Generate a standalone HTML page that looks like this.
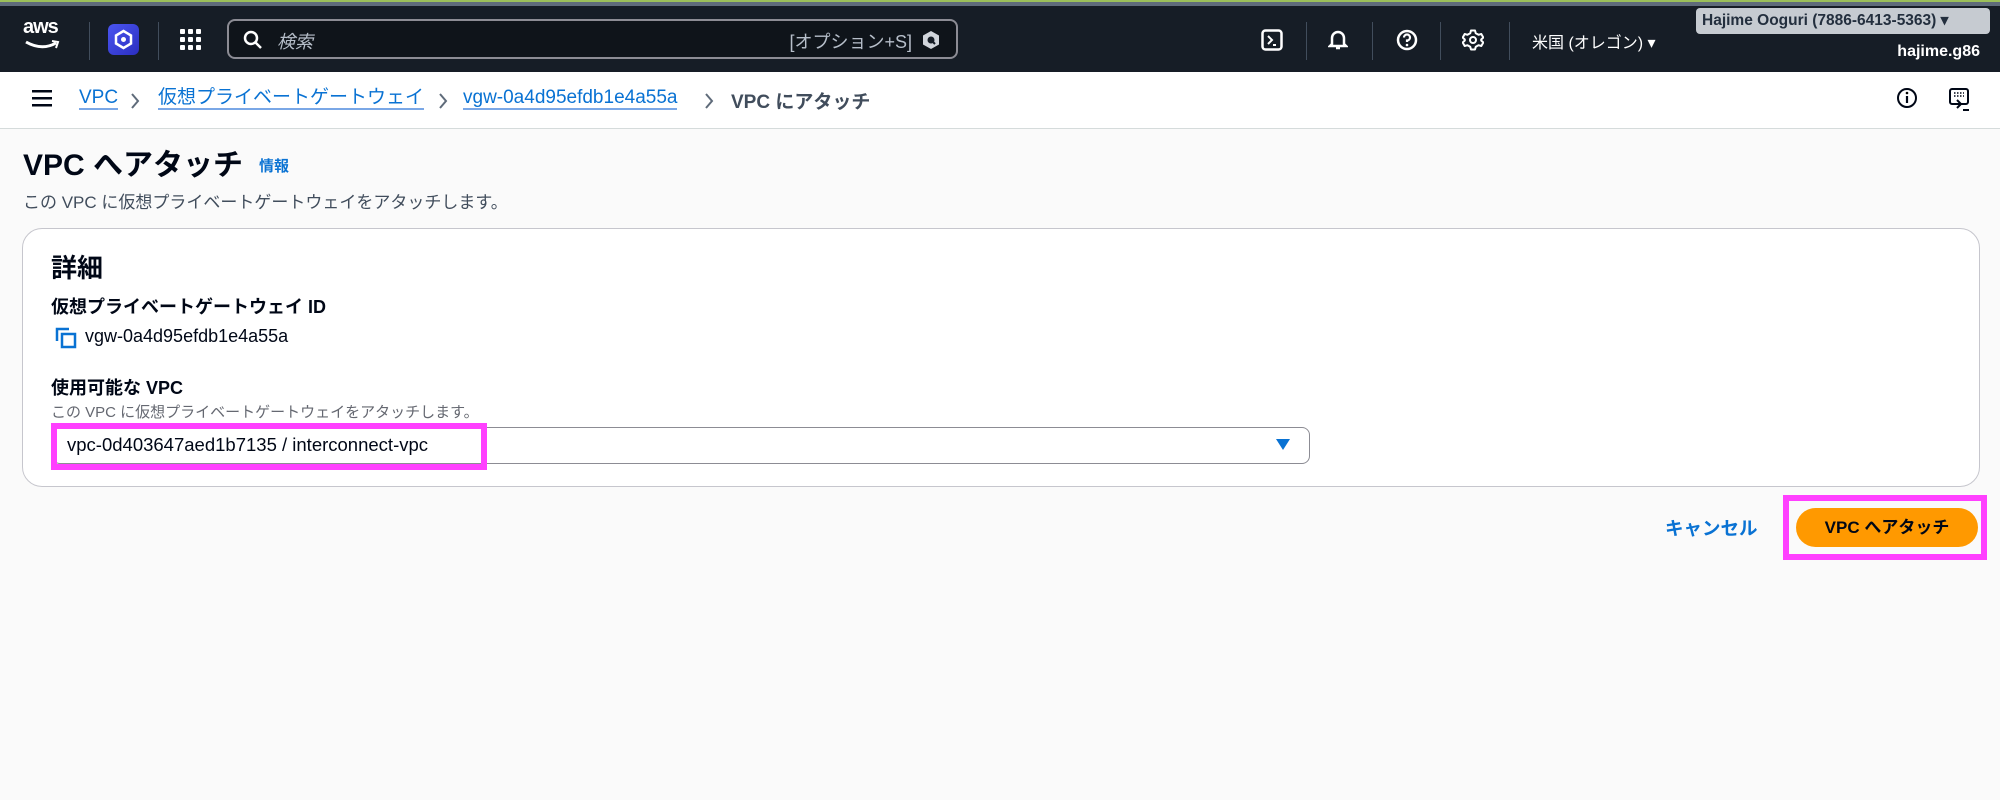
<!DOCTYPE html>
<html><head><meta charset="utf-8"><style>
*{box-sizing:border-box;margin:0;padding:0}
body{width:2000px;height:800px;overflow:hidden;background:#fafafa;font-family:"Liberation Sans","Noto Sans CJK JP",sans-serif;color:#000716;position:relative}
.a{position:absolute;white-space:nowrap}
.top{position:absolute;left:0;top:0;width:2000px;height:72px;background:#161d26;border-top:2px solid #9bbf5a}
.top:before{content:"";position:absolute;left:0;top:0;width:100%;height:4px;background:#5f6b7a}
.div{position:absolute;top:20px;width:1px;height:38px;background:#414d5c}
.crumb{position:absolute;left:0;top:72px;width:2000px;height:57px;background:#fff;border-bottom:1px solid #d5dbdb}
.lk{color:#0972d3;border-bottom:2px solid #7aa7e6;line-height:22px}
.bc{position:absolute;top:15px;font-size:19px}
.card{position:absolute;left:22px;top:228px;width:1958px;height:259px;background:#fff;border:1px solid #c6c6cd;border-radius:20px}
.mag{position:absolute;border:6px solid #ff40ff}
</style></head><body>
<div class="top">
 <div class="a" style="left:23px;top:14px;color:#fff;font-size:20px;font-weight:bold;letter-spacing:-1px">aws</div>
 <svg class="a" style="left:24px;top:38px" width="36" height="12"><path d="M2 2 Q18 11 32 3" stroke="#fff" stroke-width="3" fill="none"/><path d="M28 1 L34 2 L32 8" stroke="#fff" stroke-width="2" fill="none"/></svg>
 <div class="div" style="left:89px"></div>
 <div class="a" style="left:108px;top:22px;width:31px;height:31px;border-radius:6px;background:linear-gradient(135deg,#4a55f0,#2b2ec0)"></div>
 <svg class="a" style="left:112px;top:26px" width="23" height="23"><path d="M11.5 3 L19 7.5 V15.5 L11.5 20 L4 15.5 V7.5Z" fill="none" stroke="#fff" stroke-width="2.5"/><circle cx="11.5" cy="11.5" r="2.5" fill="#fff"/></svg>
 <div class="div" style="left:158px"></div>
 <svg class="a" style="left:180px;top:27px" width="22" height="22" fill="#fff"><rect x="0" y="0" width="5" height="5" rx="1"/><rect x="8" y="0" width="5" height="5" rx="1"/><rect x="16" y="0" width="5" height="5" rx="1"/><rect x="0" y="8" width="5" height="5" rx="1"/><rect x="8" y="8" width="5" height="5" rx="1"/><rect x="16" y="8" width="5" height="5" rx="1"/><rect x="0" y="16" width="5" height="5" rx="1"/><rect x="8" y="16" width="5" height="5" rx="1"/><rect x="16" y="16" width="5" height="5" rx="1"/></svg>
 <div class="a" style="left:227px;top:17px;width:731px;height:40px;border:2px solid #8c8c94;border-radius:8px;background:#0f141a"></div>
 <svg class="a" style="left:243px;top:28px" width="20" height="20"><circle cx="8" cy="8" r="6" stroke="#fff" stroke-width="2.5" fill="none"/><path d="M12.5 12.5 L18 18" stroke="#fff" stroke-width="2.5"/></svg>
 <div class="a" style="left:277px;top:26px;color:#b6bec9;font-size:18px;font-style:italic">検索</div>
 <div class="a" style="right:1088px;top:26px;color:#b6bec9;font-size:18px">[オプション+S]</div>
 <svg class="a" style="left:921px;top:27px" width="20" height="22"><path d="M10 2 L18 6.5 V15.5 L10 20 L2 15.5 V6.5Z" fill="#d1d5db"/><circle cx="10" cy="11" r="3.5" fill="#161d26"/><path d="M10 11 L14 15" stroke="#161d26" stroke-width="2"/></svg>
 <svg class="a" style="left:1261px;top:27px" width="22" height="22"><rect x="1.5" y="1.5" width="19" height="19" rx="3" stroke="#fff" stroke-width="2.5" fill="none"/><path d="M7 7 L11 11 L7 15 M12 16 H15" stroke="#fff" stroke-width="2" fill="none"/></svg>
 <div class="div" style="left:1306px"></div>
 <svg class="a" style="left:1328px;top:26px" width="20" height="24"><path d="M4 16 V10 A6 6 0 0 1 16 10 V16 L18 18 H2Z M8 20 H12" stroke="#fff" stroke-width="2.5" fill="none"/></svg>
 <div class="div" style="left:1372px"></div>
 <svg class="a" style="left:1396px;top:27px" width="22" height="22"><circle cx="11" cy="11" r="9" stroke="#fff" stroke-width="2.5" fill="none"/><path d="M8 8.5 A3 3 0 1 1 11 11.5 V13" stroke="#fff" stroke-width="2.2" fill="none"/><circle cx="11" cy="16" r="1.3" fill="#fff"/></svg>
 <div class="div" style="left:1440px"></div>
 <svg class="a" style="left:1462px;top:27px" width="22" height="22"><path d="M9 1.5 H13 L13.8 4.3 L16.5 5.8 L19.3 5 L21.3 8.5 L19.2 10.5 V11.5 L21.3 13.5 L19.3 17 L16.5 16.2 L13.8 17.7 L13 20.5 H9 L8.2 17.7 L5.5 16.2 L2.7 17 L0.7 13.5 L2.8 11.5 V10.5 L0.7 8.5 L2.7 5 L5.5 5.8 L8.2 4.3Z" stroke="#fff" stroke-width="2" fill="none" stroke-linejoin="round"/><circle cx="11" cy="11" r="3" stroke="#fff" stroke-width="2" fill="none"/></svg>
 <div class="div" style="left:1509px"></div>
 <div class="a" style="left:1532px;top:27px;color:#fff;font-size:16px">米国 (オレゴン) ▾</div>
 <div class="a" style="left:1696px;top:6px;width:294px;height:26px;background:#c6cbd1;border-radius:4px;font-size:15.5px;font-weight:bold;color:#232f3e;padding:3px 6px">Hajime Ooguri (7886-6413-5363) ▾</div>
 <div class="a" style="right:20px;top:41px;color:#fff;font-size:16px;font-weight:bold">hajime.g86</div>
</div>
<div class="crumb">
 <svg class="a" style="left:32px;top:18px" width="20" height="18" fill="#000716"><rect y="0" width="20" height="2.5"/><rect y="7" width="20" height="2.5"/><rect y="14" width="20" height="2.5"/></svg>
 <div class="bc" style="left:79px"><span class="lk">VPC</span></div>
 <svg class="a" style="left:129px;top:20px" width="12" height="18"><path d="M3 2 L9 9 L3 16" stroke="#5f6b7a" stroke-width="2" fill="none"/></svg>
 <div class="bc" style="left:158px"><span class="lk">仮想プライベートゲートウェイ</span></div>
 <svg class="a" style="left:437px;top:20px" width="12" height="18"><path d="M3 2 L9 9 L3 16" stroke="#5f6b7a" stroke-width="2" fill="none"/></svg>
 <div class="bc" style="left:463px"><span class="lk">vgw-0a4d95efdb1e4a55a</span></div>
 <svg class="a" style="left:703px;top:20px" width="12" height="18"><path d="M3 2 L9 9 L3 16" stroke="#5f6b7a" stroke-width="2" fill="none"/></svg>
 <div class="bc" style="left:731px;color:#414d5c;font-weight:bold">VPC にアタッチ</div>
 <svg class="a" style="left:1896px;top:15px" width="22" height="22"><circle cx="11" cy="11" r="9" stroke="#000716" stroke-width="2" fill="none"/><path d="M11 9 V16" stroke="#000716" stroke-width="2.2"/><circle cx="11" cy="6" r="1.3"/></svg>
 <svg class="a" style="left:1948px;top:15px" width="24" height="26"><rect x="2" y="2" width="18" height="15" rx="2" stroke="#000716" stroke-width="2" fill="none"/><path d="M6 6 H16 M6 9 H16" stroke="#000716" stroke-width="1.5" stroke-dasharray="1.5 1.5"/><path d="M9 13 L13 17 L9 21 M15 23 H21" stroke="#000716" stroke-width="2" fill="none"/></svg>
</div>
<div class="a" style="left:23px;top:140px;font-size:30px;font-weight:bold">VPC へアタッチ</div>
<div class="a" style="left:259px;top:155px;font-size:15px;color:#0972d3;font-weight:bold">情報</div>
<div class="a" style="left:23px;top:188px;font-size:17px;color:#414d5c">この VPC に仮想プライベートゲートウェイをアタッチします。</div>
<div class="card"></div>
<div class="a" style="left:51px;top:248px;font-size:26px;font-weight:bold">詳細</div>
<div class="a" style="left:51px;top:293px;font-size:18px;font-weight:bold">仮想プライベートゲートウェイ ID</div>
<svg class="a" style="left:55px;top:327px" width="22" height="22"><path d="M2 14 V2 H14" stroke="#0972d3" stroke-width="2.5" fill="none"/><rect x="7" y="7" width="13" height="13" stroke="#0972d3" stroke-width="2.5" fill="none"/></svg>
<div class="a" style="left:85px;top:326px;font-size:18px">vgw-0a4d95efdb1e4a55a</div>
<div class="a" style="left:51px;top:374px;font-size:18px;font-weight:bold">使用可能な VPC</div>
<div class="a" style="left:51px;top:401px;font-size:15px;color:#656871">この VPC に仮想プライベートゲートウェイをアタッチします。</div>
<div class="a" style="left:52px;top:427px;width:1258px;height:37px;border:1px solid #8c8c94;border-radius:8px;background:#fff"></div>
<svg class="a" style="left:1276px;top:439px" width="14" height="12"><path d="M0 0 H14 L7 11Z" fill="#0972d3"/></svg>
<div class="mag" style="left:51px;top:423px;width:436px;height:47px"></div>
<div class="a" style="left:67px;top:434px;font-size:18.5px">vpc-0d403647aed1b7135 / interconnect-vpc</div>
<div class="a" style="left:1665px;top:515px;font-size:18.5px;font-weight:bold;color:#0972d3">キャンセル</div>
<div class="mag" style="left:1783px;top:495px;width:204px;height:65px"></div>
<div class="a" style="left:1796px;top:508px;width:182px;height:39px;border-radius:20px;background:#ff9900;font-size:17px;font-weight:bold;text-align:center;line-height:39px">VPC へアタッチ</div>
</body></html>
